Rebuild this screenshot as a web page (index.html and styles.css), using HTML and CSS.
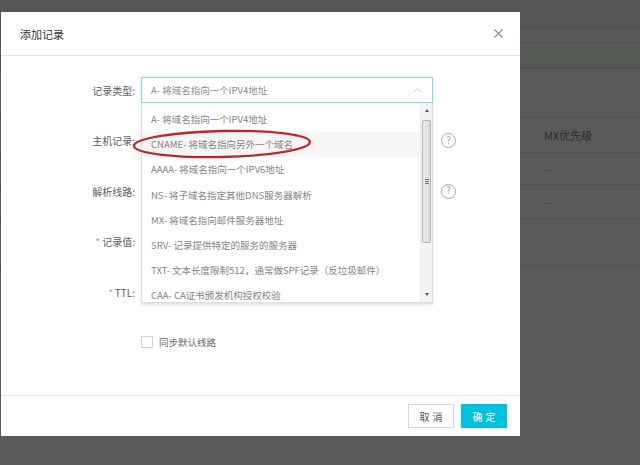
FILE: index.html
```html
<!DOCTYPE html>
<html lang="zh-CN">
<head>
<meta charset="utf-8">
<title>添加记录</title>
<link rel="stylesheet" href="styles.css">
</head>
<body>
<div class="page">
  <div class="topbar"></div>
  <div class="subbar"></div>
  <div class="notice"></div>
  <div class="spacer"></div>
  <div class="table">
    <div class="trow thead">MX优先级</div>
    <div class="trow r1">--</div>
    <div class="trow r2">--</div>
    <div class="trow r3"></div>
  </div>
</div>

<div class="modal">
  <div class="modal-header">
    <span class="modal-title">添加记录</span>
    <svg class="close" width="9" height="9" viewBox="0 0 9 9"><path d="M0.5 0.5 L8.5 8.5 M8.5 0.5 L0.5 8.5" stroke="#8c8c8c" stroke-width="1.1" fill="none"/></svg>
  </div>
  <div class="modal-body">
    <div class="form">
      <div class="label">记录类型:</div>
      <div class="control select-wrap">
        <div class="select">
          <span>A- 将域名指向一个IPV4地址</span>
          <svg class="chev" width="9" height="5" viewBox="0 0 9 5"><path d="M0.5 4.5 L4.5 0.7 L8.5 4.5" stroke="#c8c8c8" stroke-width="1" fill="none"/></svg>
        </div>
        <div class="dropdown">
          <div class="options">
            <div class="opt">A- 将域名指向一个IPV4地址</div>
            <div class="opt hover">CNAME- 将域名指向另外一个域名</div>
            <div class="opt">AAAA- 将域名指向一个IPV6地址</div>
            <div class="opt">NS- 将子域名指定其他DNS服务器解析</div>
            <div class="opt">MX- 将域名指向邮件服务器地址</div>
            <div class="opt">SRV- 记录提供特定的服务的服务器</div>
            <div class="opt">TXT- 文本长度限制512，通常做SPF记录（反垃圾邮件）</div>
            <div class="opt">CAA- CA证书颁发机构授权校验</div>
          </div>
          <div class="scrollbar">
            <div class="sb-btn"><span class="tri-up"></span></div>
            <div class="sb-thumb"><span class="grip"></span></div>
            <div class="sb-fill"></div>
            <div class="sb-btn"><span class="tri-down"></span></div>
          </div>
        </div>
      </div>
      <div class="extra"></div>

      <div class="label">主机记录:</div>
      <div class="control"></div>
      <div class="extra"><span class="help">?</span></div>

      <div class="label">解析线路:</div>
      <div class="control"></div>
      <div class="extra"><span class="help">?</span></div>

      <div class="label"><span class="star">*</span> 记录值:</div>
      <div class="control"></div>
      <div class="extra"></div>

      <div class="label"><span class="star">*</span> TTL:</div>
      <div class="control"></div>
      <div class="extra"></div>
    </div>
    <div class="sync"><span class="checkbox"></span><span>同步默认线路</span></div>
  </div>
  <div class="modal-footer">
    <button class="btn btn-cancel">取消</button>
    <button class="btn btn-ok">确定</button>
  </div>
  <svg class="mark" width="184" height="36" viewBox="0 0 184 36"><ellipse cx="91" cy="18" rx="88" ry="13" transform="rotate(-1.3 91 18)" stroke="#c0252b" stroke-width="2.3" fill="none"/></svg>
</div>
</body>
</html>
```

FILE: styles.css
```css
html, body {
  margin: 0;
  padding: 0;
}
body {
  width: 640px;
  height: 465px;
  overflow: hidden;
  position: relative;
  background: #5a5a5a;
  font-family: "Noto Sans CJK SC", "Liberation Sans", sans-serif;
}

/* dimmed background page */
.page {
  display: flex;
  flex-direction: column;
}
.topbar {
  height: 28px;
  background: #565656;
  border-bottom: 1px solid #4f4f4f;
}
.subbar {
  height: 13px;
  background: #595959;
}
.notice {
  height: 25px;
  background: #545a53;
  border-top: 1px solid #4c524b;
  border-bottom: 1px solid #4c524b;
}
.spacer {
  height: 48px;
}
.table {
  border-top: 1px solid #535353;
  display: flex;
  flex-direction: column;
}
.trow {
  display: flex;
  align-items: center;
  padding-left: 544px;
  border-bottom: 1px solid #535353;
  font-size: 11px;
  color: #2e2e2e;
}
.thead { height: 34px; }
.r1 { height: 31px; color: #3a3a3a; }
.r2 { height: 33px; color: #3a3a3a; }
.r3 { height: 46px; }

/* modal */
.modal {
  position: absolute;
  left: 1px;
  top: 12px;
  width: 519px;
  height: 424px;
  background: #fff;
  display: flex;
  flex-direction: column;
}
.modal-header {
  height: 43px;
  border-bottom: 1px solid #e6e6e6;
  display: flex;
  align-items: center;
  justify-content: space-between;
  padding: 0 17px 0 19px;
}
.modal-title {
  font-size: 11px;
  color: #333;
}
.modal-body {
  flex: 1;
  padding-top: 21px;
}
.form {
  display: grid;
  grid-template-columns: 134px 292px 24px;
  grid-auto-rows: 26px;
  column-gap: 6px;
  row-gap: 24.5px;
}
.label {
  display: flex;
  align-items: center;
  justify-content: flex-end;
  font-size: 10px;
  color: #5e5e5e;
  white-space: nowrap;
}
.star {
  color: #d49a9a;
  margin-right: 2px;
}
.control {
  position: relative;
}
.extra {
  display: flex;
  align-items: center;
}
.help {
  margin-left: 2px;
  width: 13px;
  height: 13px;
  border: 1px solid #a8a8a8;
  border-radius: 50%;
  display: flex;
  align-items: center;
  justify-content: center;
  font-size: 9.5px;
  color: #9a9a9a;
  line-height: 1;
}

.select {
  box-sizing: border-box;
  height: 26px;
  border: 1px solid #8ad8e7;
  box-shadow: 0 0 2px rgba(0, 193, 222, 0.35);
  display: flex;
  align-items: center;
  justify-content: space-between;
  padding: 0 10px 0 9px;
  font-size: 9.5px;
  color: #8e8e8e;
  background: #fff;
}
.dropdown {
  position: absolute;
  top: 26px;
  left: 0;
  width: 292px;
  height: 200px;
  box-sizing: border-box;
  border: 1px solid #dedede;
  border-top: none;
  background: #fff;
  box-shadow: 0 2px 3px rgba(0, 0, 0, 0.12);
  overflow: hidden;
  display: flex;
  z-index: 2;
}
.options {
  flex: 1;
  padding-top: 4px;
}
.opt {
  height: 25.2px;
  line-height: 25.2px;
  padding-left: 9px;
  font-size: 9.5px;
  color: #858585;
  white-space: nowrap;
}
.opt.hover {
  background: #f6f6f6;
}
.scrollbar {
  width: 11px;
  background: #f3f3f3;
  border-left: 1px solid #ececec;
  display: flex;
  flex-direction: column;
  align-items: center;
}
.sb-btn {
  height: 15px;
  width: 100%;
  display: flex;
  align-items: center;
  justify-content: center;
}
.tri-up {
  width: 0;
  height: 0;
  border-left: 2.5px solid transparent;
  border-right: 2.5px solid transparent;
  border-bottom: 3px solid #555;
}
.tri-down {
  width: 0;
  height: 0;
  border-left: 2.5px solid transparent;
  border-right: 2.5px solid transparent;
  border-top: 3px solid #555;
}
.sb-thumb {
  margin-top: 2px;
  width: 9px;
  height: 123px;
  box-sizing: border-box;
  border: 1px solid #b4b4b4;
  border-radius: 2px;
  background: linear-gradient(to right, #ececec, #dadada);
  display: flex;
  align-items: center;
  justify-content: center;
}
.grip {
  width: 4px;
  height: 5px;
  border-top: 1px solid #777;
  border-bottom: 1px solid #777;
  box-sizing: border-box;
  background: linear-gradient(#777, #777) center / 100% 1px no-repeat;
}
.sb-fill {
  flex: 1;
}

.sync {
  margin-top: 30px;
  padding-left: 140px;
  display: flex;
  align-items: center;
  gap: 6px;
  font-size: 9.5px;
  color: #6a6a6a;
}
.checkbox {
  width: 12px;
  height: 12px;
  box-sizing: border-box;
  border: 1px solid #d2d2d2;
  background: #fff;
}

.modal-footer {
  border-top: 1px solid #e6e6e6;
  display: flex;
  justify-content: flex-end;
  align-items: flex-start;
  padding: 8px 13px 0 0;
  box-sizing: border-box;
  height: 41px;
  gap: 7px;
}
.btn {
  width: 46px;
  height: 24px;
  box-sizing: border-box;
  font-family: inherit;
  font-size: 10px;
  letter-spacing: 3px;
  padding: 0 0 0 3px;
  cursor: pointer;
}
.btn-cancel {
  background: #fff;
  border: 1px solid #d6d6d6;
  color: #555;
}
.btn-ok {
  background: #00c1de;
  border: none;
  color: #fff;
}

.mark {
  position: absolute;
  left: 130px;
  top: 114px;
  z-index: 3;
}
```
